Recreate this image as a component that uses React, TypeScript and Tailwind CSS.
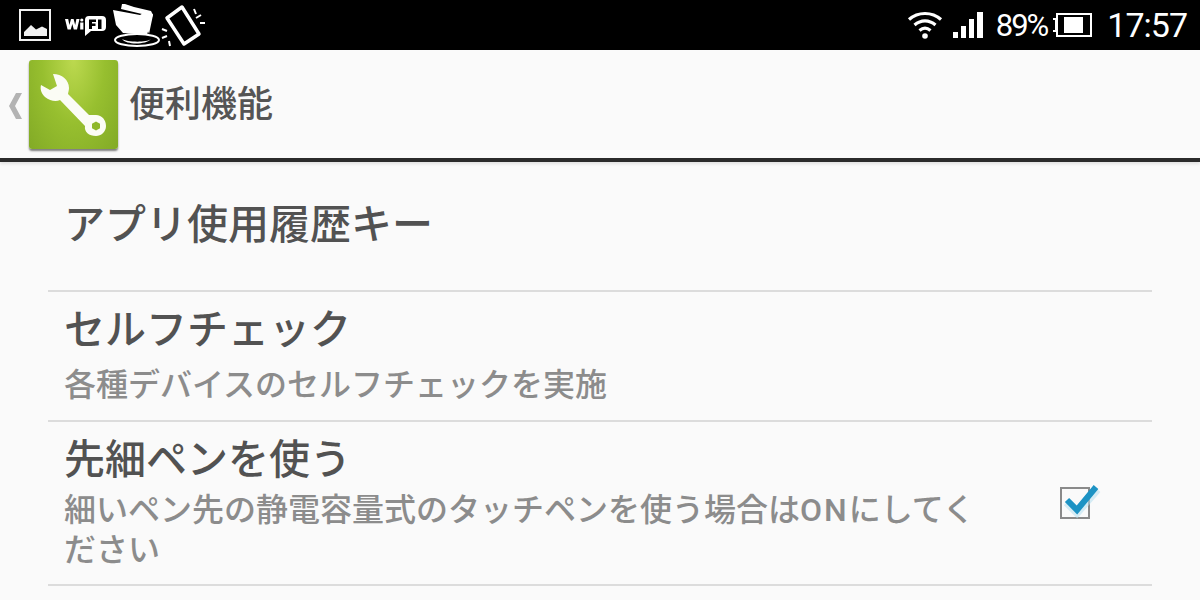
import React from "react";

const CJK = "font-['Roboto','Noto_Sans_CJK_JP',sans-serif]";

function PictureIcon() {
  return (
    <svg width="34" height="34" viewBox="0 0 34 34" className="shrink-0">
      <rect x="2" y="2" width="30" height="30" fill="none" stroke="#f2f2f2" strokeWidth="2" />
      <path d="M6 28V24L13 17L18 21.500L24 18.500L29 21V28Z" fill="#f2f2f2" />
    </svg>
  );
}

function WifiFiIcon() {
  return (
    <svg width="42" height="26" viewBox="0 0 42 26" className="shrink-0">
      <path d="M0 7H3.200L4.400 13L6 7H8.600L10.200 13L11.400 7H14.500L12 17.500H8.800L7.300 12L5.800 17.500H2.600Z" fill="#fff" />
      <circle cx="16.800" cy="8" r="1.600" fill="#fff" />
      <rect x="15.200" y="10.500" width="3.200" height="7" fill="#fff" />
      <path d="M24 4H37Q41 4 41 8V15Q41 19 37 19H26L20 24V8Q20 4 24 4Z" fill="#fff" />
      <path d="M24 7.500H31V10H27V11.500H30.500V14H27V17H24Z" fill="#000" />
      <rect x="33" y="7.500" width="3.500" height="9.500" fill="#000" />
    </svg>
  );
}

function FolderIcon() {
  return (
    <svg width="48" height="48" viewBox="0 0 48 48" className="shrink-0">
      <path d="M10 3H13L22 6L39 10L41 14L37 33L30 13L9 8Z" fill="#fff" />
      <path d="M1 9L28 14L32 11.500L41 13L35 34L11 32L4 24Z" fill="#fff" />
      <ellipse cx="25" cy="39" rx="22" ry="6" fill="none" stroke="#fff" strokeWidth="2" />
      <path d="M10 38C14 41 34 42 39 38C34 44 14 44 10 38Z" fill="#fff" />
    </svg>
  );
}

function RotateIcon() {
  return (
    <svg width="46" height="48" viewBox="0 0 46 48" className="shrink-0">
      <path d="M23 6L40 33L25 43L8 17Z" fill="none" stroke="#fff" strokeWidth="3.500" strokeLinejoin="round" />
      <path d="M35 8L37 13M42 14L37 17M46 22H41" stroke="#fff" strokeWidth="2" />
      <path d="M3 28L8 30M3 37L8 35M10 40L11 45" stroke="#fff" strokeWidth="2" />
    </svg>
  );
}

function WifiIcon() {
  return (
    <svg width="36" height="30" viewBox="0 0 36 30" className="shrink-0">
      <g fill="none" stroke="#fff" strokeWidth="3.200">
        <path d="M2 9.500C11 1.500 25 1.500 34 9.500" />
        <path d="M7.500 15C14 9.500 22 9.500 28.500 15" />
        <path d="M12.500 20.500C16 17.500 20 17.500 23.500 20.500" />
      </g>
      <circle cx="18" cy="26" r="2.800" fill="#fff" />
    </svg>
  );
}

function SignalIcon() {
  return (
    <svg width="30" height="26" viewBox="0 0 30 26" className="shrink-0">
      <rect x="0" y="20" width="5" height="6" fill="#fff" />
      <rect x="8" y="14" width="5" height="12" fill="#fff" />
      <rect x="16" y="7" width="5" height="19" fill="#fff" />
      <rect x="24" y="0" width="6" height="26" fill="#fff" />
    </svg>
  );
}

function BatteryIcon() {
  return (
    <svg width="39" height="24" viewBox="0 0 39 24" className="shrink-0">
      <rect x="0" y="5" width="4" height="14" fill="#fff" />
      <rect x="4" y="1" width="34" height="22" fill="none" stroke="#fff" strokeWidth="2" />
      <rect x="0" y="7" width="2" height="10" fill="#000" />
      <rect x="11" y="4" width="19" height="16" fill="#fff" />
    </svg>
  );
}

function WrenchTile() {
  return (
    <div className="w-[89px] h-[89px] rounded-[3px] bg-[radial-gradient(ellipse_at_50%_0%,#bcd94f_0%,#97bf2f_50%,#82aa26_100%)] shadow-[0_2px_2px_rgba(0,0,0,0.5)] shrink-0">
      <svg width="89" height="89" viewBox="0 0 89 89">
        <path
          d="M24 14C33 14 40 20 40 28C40 30 39 33 39 34L60 55C62 55 64 55 67 55C73 55 77 60 77 66C77 72 72 76 67 76C60 76 55 72 56 66L31 40C27 42 21 41 16 37C12 33 11 29 12 25L21 30L28 26L24 14Z"
          fill="#fbfcf5"
        />
        <path d="M67 61.500L71 63.750V68.250L67 70.500L63 68.250V63.750Z" fill="#8fb82a" />
      </svg>
    </div>
  );
}

function Checkbox() {
  return (
    <svg width="42" height="40" viewBox="0 0 42 40" className="shrink-0">
      <rect x="2" y="7" width="28" height="30" fill="none" stroke="#8a8a8a" strokeWidth="2" />
      <path d="M8 21L18 31L38 8" fill="none" stroke="#b5dfef" strokeWidth="9" opacity="0.55" />
      <path d="M8 19L18 29L37 6" fill="none" stroke="#1d93c4" strokeWidth="6" />
    </svg>
  );
}

export default function App() {
  return (
    <div className={`w-[1200px] h-[600px] overflow-hidden bg-[#fafafa] ${CJK}`}>
      {/* status bar */}
      <div className="h-[50px] bg-black flex items-center justify-between pl-[18px] pr-[13px] text-white">
        <div className="flex items-center">
          <PictureIcon />
          <div className="ml-[13px]"><WifiFiIcon /></div>
          <div className="ml-[5px]"><FolderIcon /></div>
          <div className="ml-[-1px]"><RotateIcon /></div>
        </div>
        <div className="flex items-center">
          <WifiIcon />
          <div className="ml-[10px]"><SignalIcon /></div>
          <span className="ml-[13px] text-[31px] leading-none tracking-[-2px]">89%</span>
          <div className="ml-[6px]"><BatteryIcon /></div>
          <span className="ml-[15px] text-[34px] leading-none tracking-[-1px]">17:57</span>
        </div>
      </div>

      {/* action bar */}
      <div className="h-[112px] flex items-center pl-[8px] border-b-4 border-[#2b2b2b] shadow-[0_2px_3px_rgba(0,0,0,0.1)]">
        <svg width="15" height="28" viewBox="0 0 15 28" className="shrink-0 mt-[4px]">
          <path d="M8 1H14L7 14L14 27H8L1 14Z" fill="#b3b3b3" />
        </svg>
        <div className="ml-[6px]"><WrenchTile /></div>
        <span className="ml-[11px] text-[36px] leading-none font-medium text-[#555555] mt-[2px]">便利機能</span>
      </div>

      {/* list */}
      <div className="mx-[48px]">
        <div className="h-[130px] pl-[16px] pt-[38px] border-b-2 border-[#dcdcdc]">
          <div className="text-[41px] leading-[50px] font-medium text-[#525252]">アプリ使用履歴キー</div>
        </div>
        <div className="h-[130px] pl-[16px] pt-[13px] border-b-2 border-[#dcdcdc]">
          <div className="text-[41px] leading-[50px] font-medium text-[#525252]">セルフチェック</div>
          <div className="mt-[10px] text-[32px] leading-[40px] font-medium text-[#8c8c8c]">各種デバイスのセルフチェックを実施</div>
        </div>
        <div className="h-[164px] pl-[16px] pt-[13px] border-b-2 border-[#dcdcdc] flex items-start">
          <div className="w-[916px]">
            <div className="text-[41px] leading-[50px] font-medium text-[#525252]">先細ペンを使う</div>
            <div className="mt-[5px] text-[32px] leading-[40px] font-medium text-[#8c8c8c]">
              細いペン先の静電容量式のタッチペンを使う場合は<span className="tracking-[2px]">ON</span>にしてく
              <br />
              ださい
            </div>
          </div>
          <div className="ml-[79px] mt-[46px]"><Checkbox /></div>
        </div>
      </div>
    </div>
  );
}
